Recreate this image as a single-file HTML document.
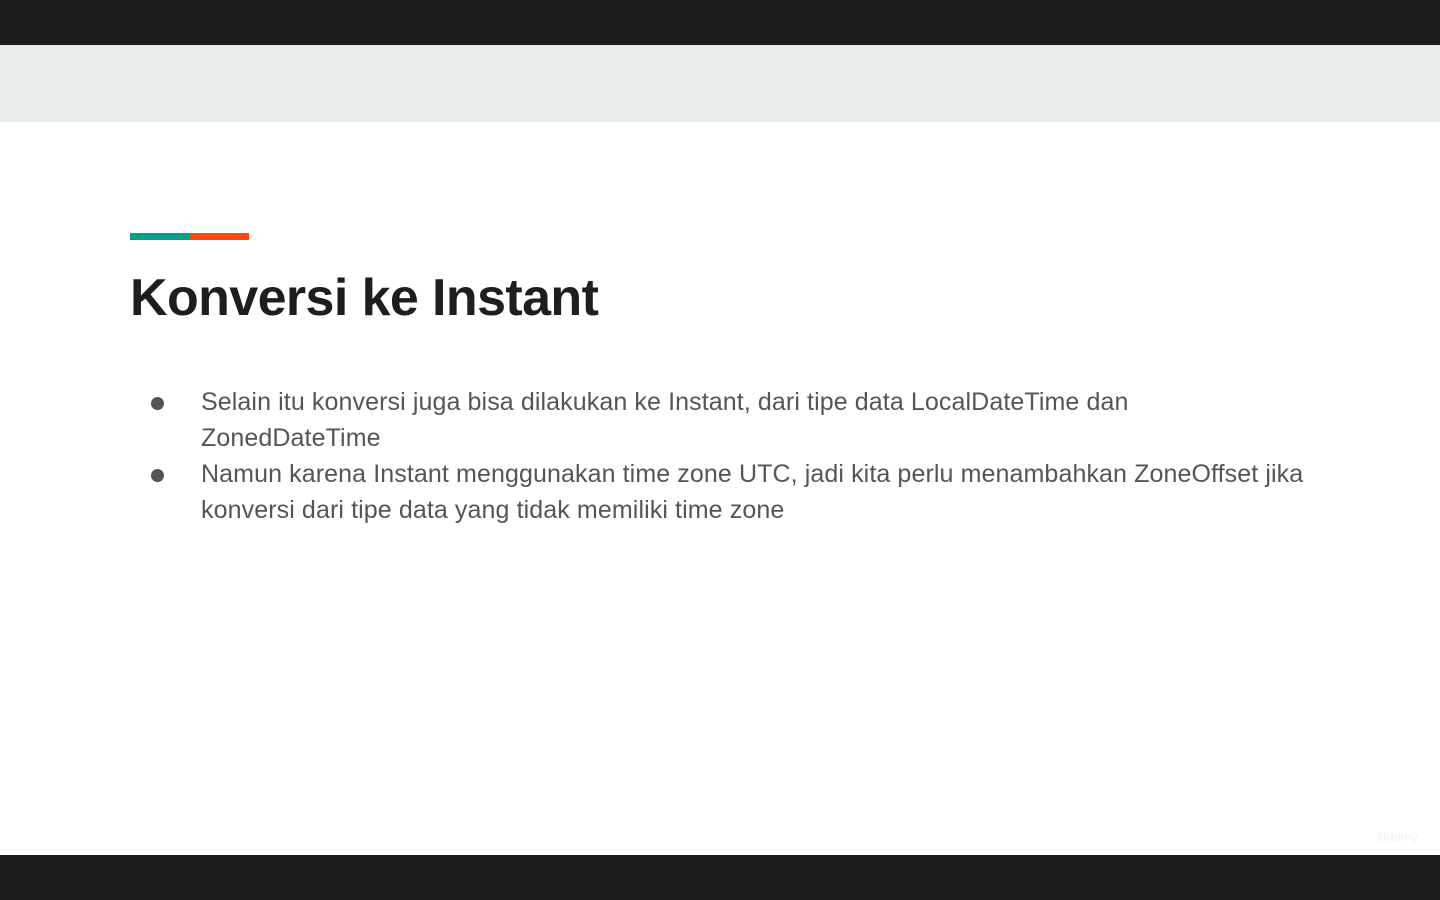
<!DOCTYPE html>
<html><head><style>
body{margin:0;width:1440px;height:900px;overflow:hidden;background:#fff;font-family:"Liberation Sans",sans-serif;position:relative}
.top{position:absolute;left:0;top:0;width:1440px;height:45px;background:#1c1c1e}
.band{position:absolute;left:0;top:45px;width:1440px;height:77px;background:#e8ecea}
.bot{position:absolute;left:0;top:855px;width:1440px;height:45px;background:#1c1c1e}
.bar1{position:absolute;left:130px;top:233px;width:60px;height:7px;background:#00a08a}
.bar2{position:absolute;left:190px;top:233px;width:59px;height:7px;background:#fa4a0a}
h1{position:absolute;left:130px;top:268px;margin:0;font-size:52px;font-weight:bold;color:#1e1e1e;letter-spacing:-0.6px}
.t{position:absolute;left:201px;font-size:25px;color:#555;line-height:36px;white-space:nowrap;letter-spacing:0.1px}
.b{position:absolute;left:151px;width:13px;height:13px;border-radius:50%;background:#555}
.u{position:absolute;left:1378px;top:830px;font-size:12px;font-weight:bold;color:#f4f4f4}
</style></head><body>
<div class="top"></div><div class="band"></div><div class="bot"></div>
<div class="bar1"></div><div class="bar2"></div>
<h1>Konversi ke Instant</h1>
<div class="b" style="top:397px"></div>
<div class="t" style="top:384px">Selain itu konversi juga bisa dilakukan ke Instant, dari tipe data LocalDateTime dan<br>ZonedDateTime</div>
<div class="b" style="top:469px"></div>
<div class="t" style="top:456px">Namun karena Instant menggunakan time zone UTC, jadi kita perlu menambahkan ZoneOffset jika<br>konversi dari tipe data yang tidak memiliki time zone</div>
<div class="u">Udemy</div>
</body></html>
